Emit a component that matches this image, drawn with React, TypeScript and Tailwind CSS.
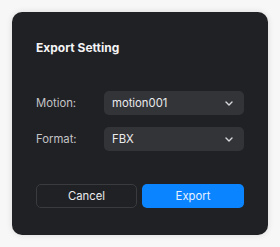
import React from "react";

function Chevron() {
  return (
    <svg width="8" height="5" viewBox="0 0 8 5" fill="none">
      <path d="M1 1L4 4L7 1" stroke="#d8d8da" strokeWidth="1.4" strokeLinecap="round" strokeLinejoin="round" />
    </svg>
  );
}

function Select({ value }: { value: string }) {
  return (
    <div className="flex h-6 w-[140px] items-center justify-between rounded-[5px] bg-[#333438] pl-2 pr-[11px] text-[11.3px] text-[#ebebed]">
      <span>{value}</span>
      <Chevron />
    </div>
  );
}

export default function App() {
  return (
    <div className="flex h-[247px] w-[280px] bg-[#f7f7f7] p-3" style={{ fontFamily: "Inter, 'Noto Sans', sans-serif" }}>
      <div className="flex w-[256px] h-[223px] flex-col rounded-[10px] bg-[#202124] px-6 pt-[30px] shadow-[0_0_6px_rgba(0,0,0,0.12)]">
        <div className="text-[12px] font-bold leading-none text-[#f4f4f5]">Export Setting</div>
        <div className="mt-[37px] flex flex-col gap-3">
          <div className="flex items-center">
            <span className="w-[68px] text-[11.3px] text-[#c4c4c7]">Motion:</span>
            <Select value="motion001" />
          </div>
          <div className="flex items-center">
            <span className="w-[68px] text-[11.3px] text-[#c4c4c7]">Format:</span>
            <Select value="FBX" />
          </div>
        </div>
        <div className="mt-[33px] flex gap-[5px]">
          <button className="flex h-6 w-[101px] items-center justify-center rounded-[5px] border border-[#3a3b3f] text-[11.3px] text-[#ebebed]">Cancel</button>
          <button className="flex h-6 w-[102px] items-center justify-center rounded-[5px] bg-[#0a84ff] text-[11.3px] text-[#e8f2ff]">Export</button>
        </div>
      </div>
    </div>
  );
}
